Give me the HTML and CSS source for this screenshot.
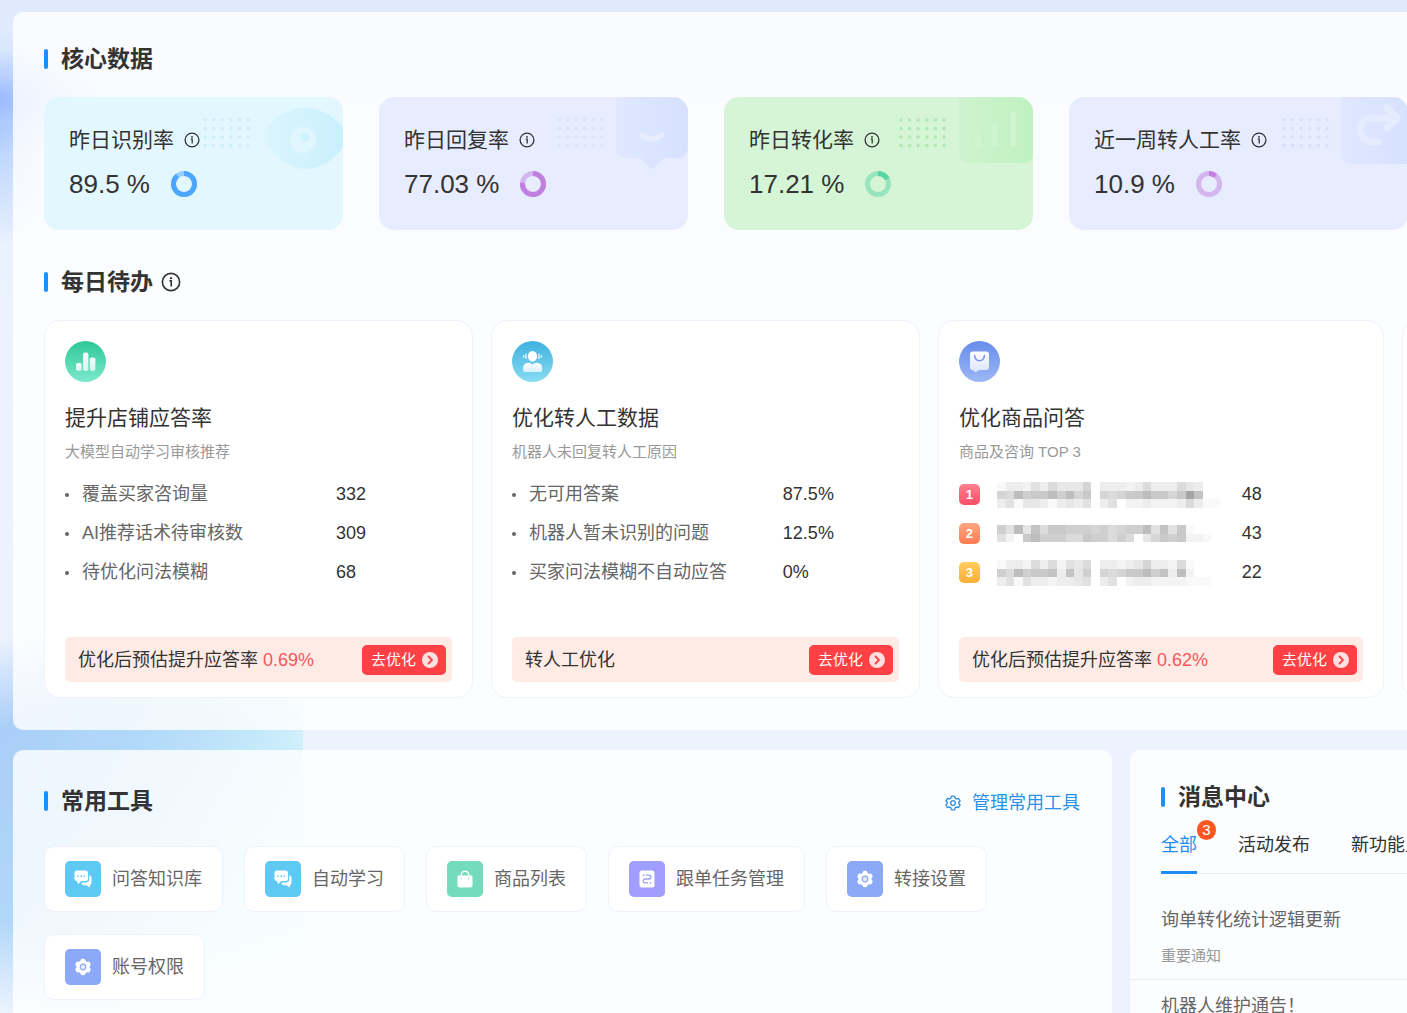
FILE: index.html
```html
<!DOCTYPE html>
<html lang="zh-CN">
<head>
    <meta charset="UTF-8">
    <meta name="viewport" content="width=device-width, initial-scale=1.0">
    <title>工作台</title>
    <link rel="stylesheet" href="styles.css">
</head>
<body>
    <!-- shared icons -->
    <svg class="sprite" aria-hidden="true">
        <defs>
            <symbol id="info" viewBox="0 0 16 16">
                <circle cx="8" cy="8" r="6.9" fill="none" stroke="currentColor" stroke-width="1.3"/>
                <circle cx="8" cy="4.9" r="0.9" fill="currentColor"/>
                <path d="M6.8 7.1H8.2V11.6" fill="none" stroke="currentColor" stroke-width="1.3"/>
            </symbol>
            <symbol id="arrow" viewBox="0 0 16 16">
                <circle cx="8" cy="8" r="8" fill="#ffe0e0"/>
                <path d="M6.5 4.5L10 8L6.5 11.5" fill="none" stroke="#ff4146" stroke-width="1.8" stroke-linecap="round" stroke-linejoin="round"/>
            </symbol>
            <symbol id="chat" viewBox="0 0 18 18">
                <path d="M3 0.5H11.5Q14 0.5 14 3V8.5Q14 11 11.5 11H7.5L4.5 13.8Q3.5 14 3.5 13V11H3Q0.5 11 0.5 8.5V3Q0.5 0.5 3 0.5Z" fill="#fff"/>
                <path d="M15.3 5.2Q17.5 5.5 17.5 8V12.5Q17.5 14.8 16 15V16.6Q15.8 17.5 14.8 17L12.5 15.2H9.5Q7.8 15 7.3 13.6L8.5 12.4H12Q15.3 12.2 15.3 9Z" fill="#fff"/>
                <path d="M4 5.5V7M7.2 5.5V7M10.4 5.5V7" stroke="#5ec9f3" stroke-width="1.5"/>
            </symbol>
            <symbol id="bag" viewBox="0 0 18 18">
                <path d="M5.2 8.5V5A3.8 3.8 0 0 1 12.8 5V8.5" fill="none" stroke="#fff" stroke-width="1.4"/>
                <path d="M2.5 5.5H4.6V9.3H6V5.5H12V9.3H13.4V5.5H15.5Q16.5 5.5 16.5 6.5V15.5Q16.5 17.5 14.5 17.5H3.5Q1.5 17.5 1.5 15.5V6.5Q1.5 5.5 2.5 5.5Z" fill="#fff"/>
            </symbol>
            <symbol id="task" viewBox="0 0 18 18">
                <rect x="1.5" y="0.5" width="15" height="17" rx="2.5" fill="#fff"/>
                <path d="M8 5.2H11A1.9 1.9 0 0 1 11 9H7.2A1.9 1.9 0 0 0 7.2 12.8H10" fill="none" stroke="#a09fff" stroke-width="1.3"/>
                <circle cx="5.6" cy="5.2" r="0.9" fill="#a09fff"/>
                <circle cx="12.4" cy="12.8" r="0.9" fill="#a09fff"/>
            </symbol>
            <symbol id="cog" viewBox="0 0 18 18">
                <g fill="#fff">
                    <circle cx="9" cy="9" r="6.6"/>
                    <rect x="6.6" y="0.8" width="4.8" height="16.4" rx="1.8"/>
                    <rect x="6.6" y="0.8" width="4.8" height="16.4" rx="1.8" transform="rotate(60 9 9)"/>
                    <rect x="6.6" y="0.8" width="4.8" height="16.4" rx="1.8" transform="rotate(120 9 9)"/>
                </g>
                <circle cx="9" cy="9" r="2.8" fill="#e3eaff" stroke="#8ca9f7" stroke-width="1.2"/>
            </symbol>
            <symbol id="cog-line" viewBox="0 0 18 18">
                <path d="M7.3 1.2H10.7L11.3 3.5L13 4.5L15.3 3.9L17 6.8L15.4 8.4V9.6L17 11.2L15.3 14.1L13 13.5L11.3 14.5L10.7 16.8H7.3L6.7 14.5L5 13.5L2.7 14.1L1 11.2L2.6 9.6V8.4L1 6.8L2.7 3.9L5 4.5L6.7 3.5Z" fill="none" stroke="currentColor" stroke-width="1.5" stroke-linejoin="round"/>
                <circle cx="9" cy="9" r="2.6" fill="none" stroke="currentColor" stroke-width="1.5"/>
            </symbol>
            <symbol id="dots" viewBox="0 0 48 32">
                <g fill="none" stroke="currentColor" stroke-width="3.6" stroke-linecap="round" stroke-dasharray="0 8.6">
                    <path d="M2 3H46"/>
                    <path d="M2 11.6H46"/>
                    <path d="M2 20H46"/>
                    <path d="M2 28.6H46"/>
                </g>
            </symbol>
            <linearGradient id="eyeFill" x1="0" x2="1"><stop offset="0" stop-color="#dcf5fe"/><stop offset="1" stop-color="#c9f0fd"/></linearGradient>
            <linearGradient id="blueFill" x1="0" x2="1"><stop offset="0" stop-color="#e0e8ff"/><stop offset="1" stop-color="#d6e1ff"/></linearGradient>
            <linearGradient id="greenFill" x1="0" x2="1"><stop offset="0" stop-color="#cff3cf"/><stop offset="1" stop-color="#bff1c0"/></linearGradient>
            <linearGradient id="iconFade" x1="0" y1="0" x2="0" y2="1"><stop offset="0" stop-color="#fff"/><stop offset="1" stop-color="#fff" stop-opacity="0.7"/></linearGradient>
        </defs>
    </svg>

    <main class="page">
        <section class="panel overview">
            <h2 class="heading">核心数据</h2>
            <div class="metrics">
                <div class="metric cyan">
                    <svg class="decor" viewBox="0 0 150 80">
                        <use href="#dots" x="10" y="20" width="48" height="32" color="#cdeefa"/>
                        <path d="M71 43C69 40 69 38 71 35C81 20 94 11 112 11C129 11 142 20 150 31V50C141 63 128 72 112 72C94 72 81 58 71 43Z" fill="url(#eyeFill)"/>
                        <circle cx="110" cy="43" r="13" fill="#e1f7ff"/>
                        <circle cx="112" cy="40" r="4.5" fill="#cdf1fd"/>
                    </svg>
                    <h3 class="metric-title">昨日识别率 <svg class="info"><use href="#info"/></svg></h3>
                    <p class="metric-value">89.5 %
                        <svg class="ring" viewBox="0 0 26 26"><circle class="track" cx="13" cy="13" r="10.5"/><circle class="arc" cx="13" cy="13" r="10.5" pathLength="100" stroke-dasharray="89.5 100"/></svg>
                    </p>
                </div>
                <div class="metric violet">
                    <svg class="decor" viewBox="0 0 150 80">
                        <use href="#dots" x="19" y="20" width="48" height="32" color="#dbe4fb"/>
                        <path d="M78 0H150V49Q150 61 138 61H126L117 70Q114 74 111 70L102 61H90Q78 61 78 49Z" fill="url(#blueFill)"/>
                        <path d="M104 38Q114 46 124 38" fill="none" stroke="#e8edff" stroke-width="5" stroke-linecap="round"/>
                    </svg>
                    <h3 class="metric-title">昨日回复率 <svg class="info"><use href="#info"/></svg></h3>
                    <p class="metric-value">77.03 %
                        <svg class="ring" viewBox="0 0 26 26"><circle class="track" cx="13" cy="13" r="10.5"/><circle class="arc" cx="13" cy="13" r="10.5" pathLength="100" stroke-dasharray="77.03 100"/></svg>
                    </p>
                </div>
                <div class="metric green">
                    <svg class="decor" viewBox="0 0 150 80">
                        <use href="#dots" x="16" y="20" width="48" height="32" color="#b0e9b3"/>
                        <path d="M76 0H150V56Q150 66 140 66H86Q76 66 76 56Z" fill="url(#greenFill)"/>
                        <path d="M95 41V47M112 29V47M130 17V47" stroke="#cff5cf" stroke-width="6" stroke-linecap="round"/>
                    </svg>
                    <h3 class="metric-title">昨日转化率 <svg class="info"><use href="#info"/></svg></h3>
                    <p class="metric-value">17.21 %
                        <svg class="ring" viewBox="0 0 26 26"><circle class="track" cx="13" cy="13" r="10.5"/><circle class="arc" cx="13" cy="13" r="10.5" pathLength="100" stroke-dasharray="17.21 100"/></svg>
                    </p>
                </div>
                <div class="metric violet">
                    <svg class="decor" viewBox="0 0 150 80">
                        <use href="#dots" x="24" y="20" width="48" height="32" color="#d7e1fb"/>
                        <path d="M83 0H150V67H95Q83 67 83 55Z" fill="url(#blueFill)"/>
                        <path d="M121 45H116C99 45 96 21 116 21H139M129 11L139 21L129 31" fill="none" stroke="#e6ecff" stroke-width="7" stroke-linecap="round" stroke-linejoin="round"/>
                    </svg>
                    <h3 class="metric-title">近一周转人工率 <svg class="info"><use href="#info"/></svg></h3>
                    <p class="metric-value">10.9 %
                        <svg class="ring" viewBox="0 0 26 26"><circle class="track" cx="13" cy="13" r="10.5"/><circle class="arc" cx="13" cy="13" r="10.5" pathLength="100" stroke-dasharray="10.9 100"/></svg>
                    </p>
                </div>
            </div>

            <h2 class="heading daily">每日待办 <svg class="info large"><use href="#info"/></svg></h2>
            <div class="todos">
                <article class="todo">
                    <svg class="todo-icon teal" viewBox="0 0 41 41">
                        <g fill="url(#iconFade)">
                            <rect x="11" y="22" width="5.6" height="8" rx="2"/>
                            <rect x="18" y="11.5" width="5.4" height="18.5" rx="2"/>
                            <rect x="24.8" y="16.5" width="5.6" height="13.5" rx="2"/>
                        </g>
                    </svg>
                    <h3 class="todo-title">提升店铺应答率</h3>
                    <p class="todo-sub">大模型自动学习审核推荐</p>
                    <ul class="rows">
                        <li><span class="bullet">覆盖买家咨询量</span><span class="value">332</span></li>
                        <li><span class="bullet">AI推荐话术待审核数</span><span class="value">309</span></li>
                        <li><span class="bullet">待优化问法模糊</span><span class="value">68</span></li>
                    </ul>
                    <div class="tip">
                        <span>优化后预估提升应答率 <em>0.69%</em></span>
                        <button class="go">去优化 <svg><use href="#arrow"/></svg></button>
                    </div>
                </article>
                <article class="todo">
                    <svg class="todo-icon sky" viewBox="0 0 41 41">
                        <ellipse cx="20.5" cy="15.3" rx="4.6" ry="5.2" fill="#fff"/>
                        <path d="M11 29V27Q11.5 22 16 21.8Q19 22 20.5 23.5Q22 22 25 21.8Q30 22 30.2 27V29Q30.2 31 28.5 31H12.5Q11 31 11 29Z" fill="url(#iconFade)"/>
                        <path d="M14 12.8V18M27 12.8V18M11.6 14.2V16.8M29.4 14.2V16.8" stroke="#e5f8ff" stroke-width="1.4"/>
                    </svg>
                    <h3 class="todo-title">优化转人工数据</h3>
                    <p class="todo-sub">机器人未回复转人工原因</p>
                    <ul class="rows">
                        <li><span class="bullet">无可用答案</span><span class="value">87.5%</span></li>
                        <li><span class="bullet">机器人暂未识别的问题</span><span class="value">12.5%</span></li>
                        <li><span class="bullet">买家问法模糊不自动应答</span><span class="value">0%</span></li>
                    </ul>
                    <div class="tip">
                        <span>转人工优化</span>
                        <button class="go">去优化 <svg><use href="#arrow"/></svg></button>
                    </div>
                </article>
                <article class="todo wide">
                    <svg class="todo-icon indigo" viewBox="0 0 41 41">
                        <path d="M14 10.5H27Q30 10.5 30 13.5V26Q30 29 27 29H20L17 31Q15.5 31.5 15 29.5Q11 29.5 11 26V13.5Q11 10.5 14 10.5Z" fill="url(#iconFade)"/>
                        <path d="M15.6 14.5Q16 19.5 20.5 19.8Q25 19.5 25.4 14.5" fill="none" stroke="#7996ec" stroke-width="1.6" stroke-linecap="round"/>
                    </svg>
                    <h3 class="todo-title">优化商品问答</h3>
                    <p class="todo-sub">商品及咨询 TOP 3</p>
                    <ol class="rows">
                        <li><span class="ranked"><b class="rank first">1</b><svg class="mosaic" data-rows="13325364447033323633364300 76b899b8b79076799b9979fa00 35144313435035022322236311"></svg></span><span class="value">48</span></li>
                        <li><span class="ranked"><b class="rank second">2</b><svg class="mosaic" data-rows="85b4a699888786788b5a591000 5209b888669886860479892210"></svg></span><span class="value">43</span></li>
                        <li><span class="ranked"><b class="rank third">3</b><svg class="mosaic" data-rows="13326362546033234733261000 86b899a3a48076799b8a3b2000 35153323345035023322221110"></svg></span><span class="value">22</span></li>
                    </ol>
                    <div class="tip">
                        <span>优化后预估提升应答率 <em>0.62%</em></span>
                        <button class="go">去优化 <svg><use href="#arrow"/></svg></button>
                    </div>
                </article>
                <article class="todo"></article>
            </div>
        </section>

        <div class="bottom">
            <section class="panel tools">
                <div class="tools-head">
                    <h2 class="heading">常用工具</h2>
                    <a class="manage" href="#"><svg><use href="#cog-line"/></svg>管理常用工具</a>
                </div>
                <div class="tool-list">
                    <a class="tool" href="#"><span class="tool-icon cyan"><svg><use href="#chat"/></svg></span>问答知识库</a>
                    <a class="tool" href="#"><span class="tool-icon cyan"><svg><use href="#chat"/></svg></span>自动学习</a>
                    <a class="tool" href="#"><span class="tool-icon green"><svg><use href="#bag"/></svg></span>商品列表</a>
                    <a class="tool" href="#"><span class="tool-icon purple"><svg><use href="#task"/></svg></span>跟单任务管理</a>
                    <a class="tool" href="#"><span class="tool-icon blue"><svg><use href="#cog"/></svg></span>转接设置</a>
                    <a class="tool" href="#"><span class="tool-icon blue"><svg><use href="#cog"/></svg></span>账号权限</a>
                </div>
            </section>
            <section class="panel messages">
                <h2 class="heading">消息中心</h2>
                <div class="tabs">
                    <button class="tab active">全部<span class="count">3</span></button>
                    <button class="tab">活动发布</button>
                    <button class="tab">新功能上线</button>
                </div>
                <ul class="news">
                    <li><a href="#">询单转化统计逻辑更新</a><small>重要通知</small></li>
                    <li><a href="#">机器人维护通告！</a></li>
                </ul>
            </section>
        </div>
    </main>
    <script src="script.js"></script>
</body>
</html>
```
FILE: styles.css
```css
* {
    box-sizing: border-box;
}
body {
    margin: 0;
    min-height: 100vh;
    overflow: hidden;
    font-family: "Liberation Sans", "Noto Sans CJK SC", sans-serif;
    font-size: 18px;
    line-height: 26px;
    color: #333;
    background:
        radial-gradient(ellipse 120px 50px at -10px 100px, rgba(147, 180, 255, 0.9), rgba(160, 190, 255, 0.5) 45%, rgba(225, 235, 254, 0) 100%) no-repeat,
        radial-gradient(ellipse 70px 110px at 0 135px, rgba(160, 198, 250, 0.7), rgba(180, 208, 248, 0.5) 45%, rgba(225, 235, 254, 0) 100%) no-repeat,
        radial-gradient(ellipse 400px 210px at 130px 265px, rgba(237, 243, 254, 0) 55%, #edf3fe 95%) 0 560px / 303px 500px no-repeat,
        linear-gradient(120deg, #a9cdf8 15%, #b4dbf9 45%, #d3f5fb 75%) 0 560px / 303px 500px no-repeat,
        linear-gradient(180deg, #e0eaff 0, #ecf2ff 300px, #edf3fe 100%);
}
h2, h3, p, ul, ol {
    margin: 0;
    padding: 0;
}
ul, ol {
    list-style: none;
}
a {
    color: inherit;
    text-decoration: none;
}
button {
    font: inherit;
    border: 0;
    cursor: pointer;
}
.sprite {
    position: absolute;
    width: 0;
    height: 0;
}

/* the board is wider than the window and runs off its right edge */
.page {
    margin: 12px -20px 0 13px;
}
.panel {
    background-color: rgba(255, 255, 255, 0.8);
    border-radius: 10px;
    overflow: hidden;
}
.overview {
    padding: 32px 19px 32px 31px;
}
.heading {
    display: flex;
    align-items: center;
    font-size: 23px;
    line-height: 30px;
    font-weight: 600;
}
.heading::before {
    content: "";
    width: 4px;
    height: 20px;
    margin-right: 13px;
    border-radius: 2px;
    background-color: #1890ff;
}
.info {
    width: 16px;
    height: 16px;
    margin-left: 10px;
}
.info.large {
    width: 20px;
    height: 20px;
    margin-left: 8px;
}

/* metrics */
.metrics {
    display: grid;
    grid-template-columns: 299fr 309fr 309fr 339fr;
    gap: 36px;
    margin-top: 23px;
}
.metric {
    position: relative;
    padding: 28px 25px 30px;
    border-radius: 15px;
    overflow: hidden;
}
.metric.cyan {
    background-color: #e3f7ff;
}
.metric.violet {
    background-color: #e7ecff;
}
.metric.green {
    background-color: #d6f5d6;
}
.decor {
    position: absolute;
    top: 0;
    right: 0;
    width: 150px;
    height: 80px;
}
.metric-title {
    position: relative;
    display: flex;
    align-items: center;
    font-size: 21px;
    line-height: 30px;
    font-weight: 400;
}
.metric-value {
    display: flex;
    align-items: center;
    margin-top: 13px;
    font-size: 26px;
    line-height: 32px;
}
.ring {
    width: 26px;
    height: 26px;
    margin-left: 21px;
    fill: none;
    stroke-width: 5;
    transform: rotate(-90deg);
}
.track {
    opacity: 0.5;
}
.cyan .ring { stroke: #4ca6ff; }
.violet .ring { stroke: #c17fe0; }
.green .ring { stroke: #56d6a3; }

/* daily todos */
.daily {
    margin-top: 37px;
}
.todos {
    display: flex;
    gap: 18px;
    margin-top: 23px;
}
.todo {
    flex: 0 0 31.45%;
    padding: 20px 20px 15px;
    border: 1px solid #edf2fc;
    border-radius: 16px;
    background-color: #fff;
}
.todo.wide {
    flex-basis: 32.7%;
}
.todo-icon {
    display: block;
    width: 41px;
    height: 41px;
    border-radius: 50%;
}
.teal { background: linear-gradient(#2ec797, #7ce9cc); }
.sky { background: linear-gradient(#3fb1df, #88dcf2); }
.indigo { background: linear-gradient(#678cec, #9db8f5); }
.todo-title {
    margin-top: 21px;
    font-size: 21px;
    line-height: 30px;
    font-weight: 400;
}
.todo-sub {
    margin-top: 7px;
    font-size: 15px;
    line-height: 24px;
    color: #999;
}
.rows {
    margin-top: 11px;
    line-height: 39px;
}
.rows li {
    display: grid;
    grid-template-columns: 70% 30%;
    height: 39px;
}
.bullet {
    color: #666;
    white-space: nowrap;
}
.bullet::before {
    content: "";
    display: inline-block;
    width: 4px;
    height: 4px;
    margin-right: 13px;
    border-radius: 50%;
    background-color: #666;
    vertical-align: middle;
}
.ranked {
    display: flex;
    align-items: center;
    gap: 17px;
}
.rank {
    width: 21px;
    height: 21px;
    border-radius: 5px;
    font-size: 13px;
    line-height: 21px;
    text-align: center;
    color: #fff;
}
.first { background: linear-gradient(#ff8090, #fb4f66); }
.second { background: linear-gradient(#ffa582, #ff7c50); }
.third { background: linear-gradient(#ffcd60, #fcae38); }
.tip {
    display: flex;
    align-items: center;
    justify-content: space-between;
    height: 45px;
    margin-top: 45px;
    padding: 0 6px 0 13px;
    border-radius: 5px;
    background-color: #ffebe6;
    white-space: nowrap;
}
.tip em {
    font-style: normal;
    color: #f5575c;
}
.go {
    display: flex;
    align-items: center;
    gap: 6px;
    height: 30px;
    padding: 0 8px 0 9px;
    border-radius: 5px;
    background-color: #ff4146;
    font-size: 15px;
    line-height: 30px;
    color: #fff;
}
.go svg {
    width: 16px;
    height: 16px;
}

/* tools and messages */
.bottom {
    display: grid;
    grid-template-columns: minmax(0, 1099fr) minmax(0, 297fr);
    gap: 18px;
    margin-top: 20px;
}
.tools {
    padding: 36px 32px 30px 31px;
}
.tools-head {
    display: flex;
    align-items: flex-start;
    justify-content: space-between;
}
.manage {
    display: flex;
    align-items: center;
    gap: 11px;
    line-height: 34px;
    color: #2a91e8;
}
.manage svg {
    width: 16px;
    height: 16px;
}
.tool-list {
    display: flex;
    flex-wrap: wrap;
    gap: 22px 21px;
    margin-top: 26px;
}
.tool {
    display: flex;
    align-items: center;
    gap: 11px;
    padding: 14px 20px;
    border: 1px solid #edf3fc;
    border-radius: 10px;
    background-color: #fff;
    color: #666;
}
.tool-icon {
    display: grid;
    place-items: center;
    width: 36px;
    height: 36px;
    border-radius: 5px;
}
.tool-icon svg {
    width: 18px;
    height: 18px;
}
.tool-icon.cyan { background-color: #5ec9f3; }
.tool-icon.green { background-color: #75dbbd; }
.tool-icon.purple { background-color: #a09fff; }
.tool-icon.blue { background-color: #8ca9f7; }

.messages {
    padding-top: 32px;
}
.messages .heading {
    margin-left: 31px;
}
.tabs {
    display: flex;
    gap: 41px;
    margin: 20px 0 0 31px;
    box-shadow: inset 0 -1px #e9edf3;
}
.tab {
    position: relative;
    padding: 0 0 12px;
    border-bottom: 3px solid transparent;
    background: none;
    line-height: 27px;
    color: #333;
    white-space: nowrap;
}
.tab.active {
    border-color: #1f8df5;
    color: #1f8df5;
}
.count {
    position: absolute;
    top: -12px;
    right: -19px;
    width: 19px;
    height: 20px;
    border-radius: 10px;
    background-color: #fc5722;
    font-size: 15px;
    line-height: 20px;
    color: #fff;
}
.news {
    margin-top: 20px;
}
.news li {
    padding: 13px 31px 11px;
    border-bottom: 1px solid #e9edf3;
    white-space: nowrap;
    color: #666;
}
.news small {
    display: block;
    margin-top: 11px;
    font-size: 15px;
    line-height: 24px;
    color: #999;
}
```
FILE: script.js
```js
// product names are hidden behind a mosaic, one hex digit per cell (0 = white)
const cell = 8.57;
document.querySelectorAll('.mosaic').forEach(svg => {
    const rows = svg.dataset.rows.split(' ');
    svg.setAttribute('width', Math.round(26 * cell));
    svg.setAttribute('height', Math.round(rows.length * cell));
    svg.setAttribute('shape-rendering', 'crispEdges');
    rows.forEach((row, y) => {
        [...row].forEach((digit, x) => {
            const grey = 255 - parseInt(digit, 16) * 6;
            const rect = document.createElementNS('http://www.w3.org/2000/svg', 'rect');
            rect.setAttribute('x', x * cell);
            rect.setAttribute('y', y * cell);
            rect.setAttribute('width', cell);
            rect.setAttribute('height', cell);
            rect.setAttribute('fill', `rgb(${grey}, ${grey}, ${grey})`);
            svg.appendChild(rect);
        });
    });
});
```
